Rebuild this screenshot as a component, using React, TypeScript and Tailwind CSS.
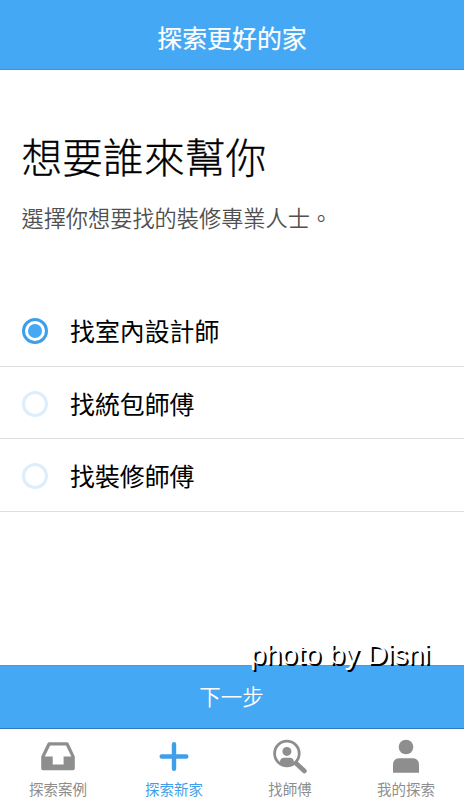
import { useState } from "react";
import type { ReactNode } from "react";

const OPTIONS = ["找室內設計師", "找統包師傅", "找裝修師傅"];

function InboxIcon() {
  return (
    <svg viewBox="0 0 36 36" className="h-9 w-9" fill="currentColor">
      <path
        fillRule="evenodd"
        d="M9.4 3.3H26.9Q28.2 3.3 28.7 4.5L34.8 17.6V29.6Q34.8 31.3 33.1 31.3H2.9Q1.2 31.3 1.2 29.6V17.6L7.4 4.5Q8 3.3 9.4 3.3ZM10.2 6.6 4.8 17.6H12.7V25.4H23.6V17.6H31.4L26 6.6Z"
      />
    </svg>
  );
}

function PlusIcon() {
  return (
    <svg viewBox="0 0 36 36" className="h-9 w-9" fill="none" stroke="currentColor" strokeWidth="4.4" strokeLinecap="round">
      <path d="M18 5.2v24.6M5.7 17.5h24.6" />
    </svg>
  );
}

function SearchPersonIcon() {
  return (
    <svg viewBox="0 0 36 36" className="h-9 w-9" fill="currentColor">
      <circle cx="14.9" cy="14.5" r="12.3" fill="none" stroke="currentColor" strokeWidth="2.8" />
      <circle cx="14.9" cy="12.4" r="4.5" />
      <path d="M8 25V22.2Q8.5 18.7 12 18.7H18Q21.3 18.7 21.8 22.2V25Q14.9 29.5 8 25Z" />
      <path d="M24 24.2 32.4 32" stroke="currentColor" strokeWidth="4.6" strokeLinecap="round" />
    </svg>
  );
}

function PersonIcon() {
  return (
    <svg viewBox="0 0 36 36" className="h-9 w-9" fill="currentColor">
      <circle cx="18" cy="8" r="7.3" />
      <path d="M5 33.8V26Q5 19.3 11.7 19.3H24.3Q31 19.3 31 26V33.8Z" />
    </svg>
  );
}

const TABS: { label: string; icon: ReactNode }[] = [
  { label: "探索案例", icon: <InboxIcon /> },
  { label: "探索新家", icon: <PlusIcon /> },
  { label: "找師傅", icon: <SearchPersonIcon /> },
  { label: "我的探索", icon: <PersonIcon /> },
];

export default function App() {
  const [selected, setSelected] = useState(0);
  const [tab, setTab] = useState(1);

  return (
    <div className="relative flex h-[800px] w-[464px] flex-col overflow-hidden bg-white font-['Noto_Sans_CJK_TC',sans-serif]">
      <header className="flex h-[70px] shrink-0 items-center justify-center border-b border-[#3c96dc] bg-[#44a8f4] pt-1.5">
        <h1 className="text-[24.9px] leading-none font-normal text-white [-webkit-text-stroke:0.2px_#fff]">探索更好的家</h1>
      </header>

      <main className="flex-1">
        <div className="px-[21.5px] pt-[58px]">
          <h2 className="text-[40.8px] leading-[56px] font-light text-black [-webkit-text-stroke:0.3px_#000]">想要誰來幫你</h2>
          <p className="mt-[17px] text-[22.2px] leading-8 font-[350] text-[#505050]">選擇你想要找的裝修專業人士。</p>
        </div>

        {/* Options */}
        <div className="mt-[61px]">
          {OPTIONS.map((option, i) => (
            <button
              key={option}
              onClick={() => setSelected(i)}
              className="flex h-[72.5px] w-full items-center border-b border-[#dedede] pt-0.5 pl-[22px] text-left"
            >
              <span
                className={`mt-px flex h-[26px] w-[26px] items-center justify-center rounded-full border-3 ${
                  selected === i ? "border-[#3d9fea]" : "border-[#dceefd]"
                }`}
              >
                {selected === i && <span className="h-3.5 w-3.5 rounded-full bg-[#44a8f4]" />}
              </span>
              <span className="ml-[22px] text-[24.9px] leading-none text-black">{option}</span>
            </button>
          ))}
        </div>
      </main>

      <button className="flex h-16 shrink-0 items-center justify-center border-y border-t-[#3f9fe8] border-b-[#2d7bbd] bg-[#44a8f4] pr-px pb-0.5 text-[21.5px] leading-none font-[350] text-white">
        下一步
      </button>

      <nav className="grid h-[71px] shrink-0 grid-cols-4 bg-white">
        {TABS.map((item, i) => (
          <button
            key={item.label}
            onClick={() => setTab(i)}
            className={`flex flex-col items-center pt-[10px] ${tab === i ? "text-[#3f9fe8]" : "text-[#8e8e8e]"}`}
          >
            {item.icon}
            <span className="mt-[7px] text-[14.5px] leading-none">{item.label}</span>
          </button>
        ))}
      </nav>

      {/* Photo credit */}
      <div className="absolute top-[638px] left-[250px] font-['Liberation_Sans',sans-serif] text-[28.4px] leading-8 whitespace-nowrap text-white [text-shadow:2px_2px_0_#000]">
        photo by Disni
      </div>
    </div>
  );
}
